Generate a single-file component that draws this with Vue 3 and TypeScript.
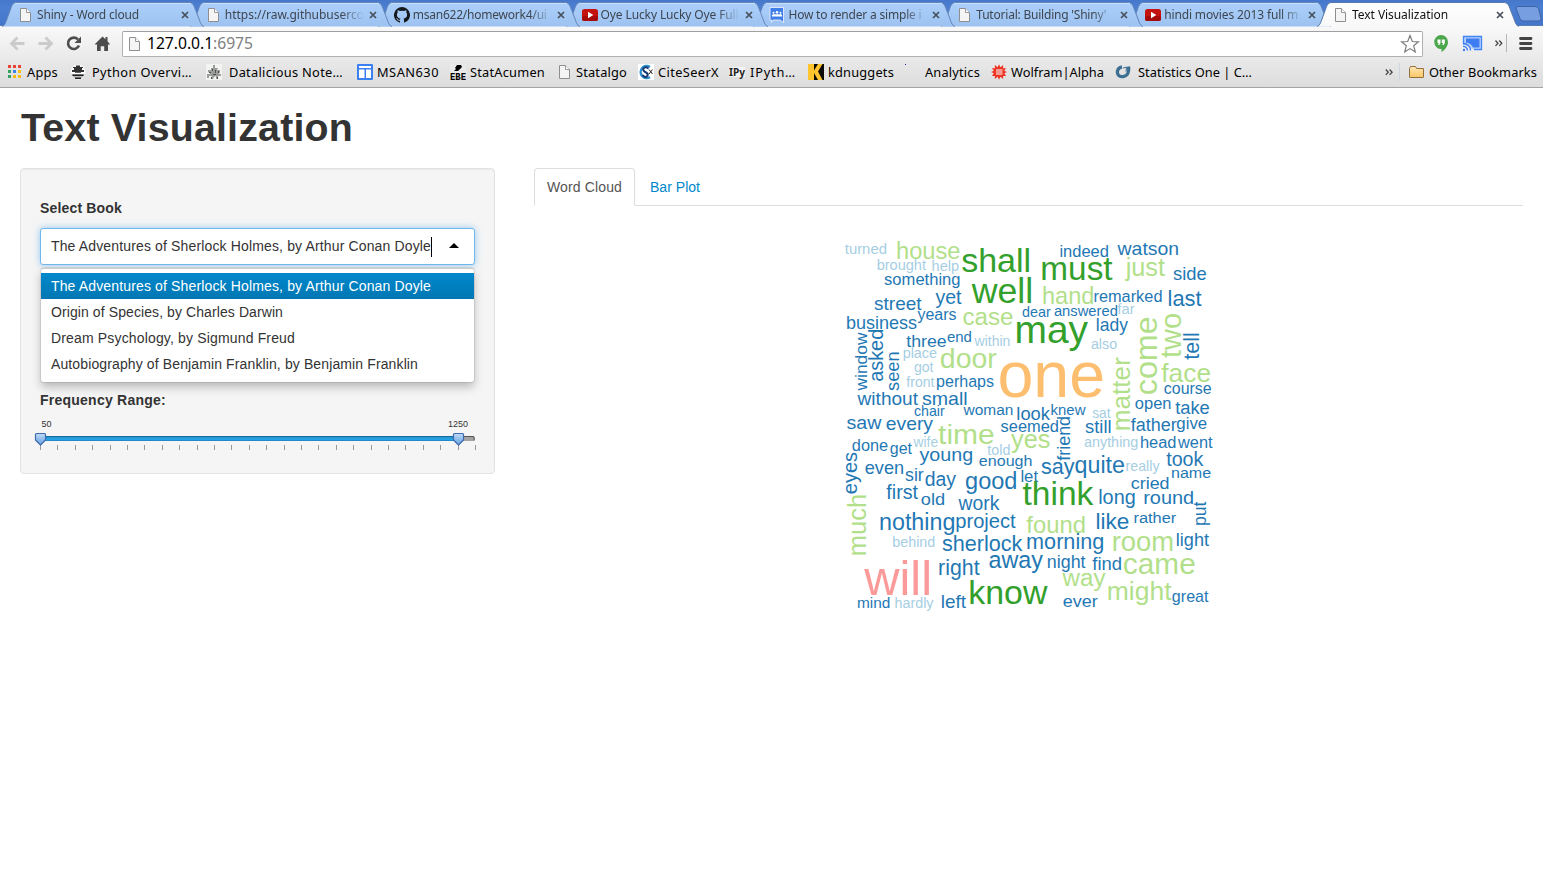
<script setup lang="ts">
import { ref } from 'vue'

type IconName =
  | 'file' | 'github' | 'youtube' | 'group' | 'apps' | 'python' | 'robot' | 'sites'
  | 'ebe' | 'cite' | 'ipy' | 'kd' | 'dot' | 'wolfram' | 'stat'

interface BrowserTab { title: string; icon: IconName; width: number }
interface Bookmark { title: string; icon: IconName; left: number; text: number; right: number }
interface Word {
  text: string
  start: number
  end: number
  base: number
  color: string
  vertical: boolean
  size?: number
}

const tabs: BrowserTab[] = [
  { title: 'Shiny - Word cloud', icon: 'file', width: 102 },
  { title: 'https://raw.githubuserco', icon: 'file', width: 139 },
  { title: 'msan622/homework4/ui', icon: 'github', width: 134 },
  { title: 'Oye Lucky Lucky Oye Full', icon: 'youtube', width: 138 },
  { title: 'How to render a simple i', icon: 'group', width: 133 },
  { title: "Tutorial: Building 'Shiny'", icon: 'file', width: 130 },
  { title: 'hindi movies 2013 full m', icon: 'youtube', width: 134 },
  { title: 'Text Visualization', icon: 'file', width: 96 },
]

const bookmarks: Bookmark[] = [
  { title: 'Apps', icon: 'apps', left: 7, text: 27, right: 58 },
  { title: 'Python Overvi…', icon: 'python', left: 70, text: 92, right: 192 },
  { title: 'Datalicious Note…', icon: 'robot', left: 206, text: 229, right: 343 },
  { title: 'MSAN630', icon: 'sites', left: 357, text: 377, right: 439 },
  { title: 'StatAcumen', icon: 'ebe', left: 450, text: 470, right: 545 },
  { title: 'Statalgo', icon: 'file', left: 557, text: 576, right: 627 },
  { title: 'CiteSeerX', icon: 'cite', left: 638, text: 658, right: 719 },
  { title: 'IPyth…', icon: 'ipy', left: 729, text: 750, right: 796 },
  { title: 'kdnuggets', icon: 'kd', left: 808, text: 828, right: 894 },
  { title: 'Analytics', icon: 'dot', left: 905, text: 925, right: 980 },
  { title: 'Wolfram|Alpha', icon: 'wolfram', left: 991, text: 1011, right: 1104 },
  { title: 'Statistics One | C…', icon: 'stat', left: 1115, text: 1138, right: 1252 },
]

const books = [
  { title: 'The Adventures of Sherlock Holmes, by Arthur Conan Doyle', width: 380 },
  { title: 'Origin of Species, by Charles Darwin', width: 232 },
  { title: 'Dream Psychology, by Sigmund Freud', width: 244 },
  { title: 'Autobiography of Benjamin Franklin, by Benjamin Franklin', width: 367 },
]
const selected = ref(0)

/* Spreads letters so that a label fills the given width. */
const vFit = {
  mounted(el: HTMLElement, binding: { value: number }) {
    const range = document.createRange()
    range.selectNodeContents(el)
    const natural = range.getBoundingClientRect().width
    const count = (el.textContent ?? '').trim().length
    if (count > 0) el.style.letterSpacing = `${(binding.value - natural) / count}px`
  },
}

const palette: Record<string, string> = {
  A: '#a6cee3', B: '#1f78b4', G: '#b2df8a', D: '#33a02c', P: '#fb9a99', O: '#fdbf6f',
}

/* Horizontal words: text, left, right, baseline, colour, optional font size */
const across = `
turned 845 886 254 A|house 897.5 959.5 259 G|brought 877.5 926 270 A|help 932.5 958.5 270.5 A
something 884.5 959.5 285 B|shall 962 1029 272 D|well 971.5 1031 302.5 D|yet 935.5 961.5 303.5 B
street 874.5 921.5 310 B|years 917.5 956 320 B|business 847 916.5 328.5 B|case 963.5 1012.5 325 G
three 906.5 946 346.5 B 17|end 947.5 971 342 B|within 974.5 1009.5 346 A|place 903.5 936.5 357.5 A
got 914.5 933.5 371.5 A|door 941 996.5 368 G|front 906.5 934.5 387 A|perhaps 937 993.5 387 B
without 857.5 918 404.5 B 18|small 922.5 966.5 404.5 B 18.3|chair 914.5 944.5 415.5 B|woman 963.5 1012.5 415 B 15.3
one 1000 1102.5 397 O|may 1017 1088 343 D|indeed 1060.5 1108 257 B|watson 1117.5 1178 255 B 18
must 1042.5 1112.5 279.5 D|just 1125 1165 275.5 G|side 1173.5 1206 279.5 B|hand 1043.5 1093 304 G
remarked 1094.5 1161.5 301.5 B|last 1169 1201.5 306 B|dear 1022.5 1050.5 317 B
answered 1054.5 1117 316 B|far 1117.5 1134.5 314 A|lady 1097 1128 331 B|also 1091.5 1116.5 348.5 A
face 1161.5 1210 381.5 G|course 1164.5 1211 393.5 B|open 1135.5 1170.5 408.5 B|take 1175.5 1209 414 B
look 1017.5 1050 420 B|knew 1051.5 1085.5 415 B|sat 1092.5 1110.5 417.5 A|saw 847 881.5 428.5 B 18.3
every 886.5 933 429.5 B 18.3|time 938.5 993.5 443.5 G 28.5|seemed 1001 1058 432 B|yes 1011 1049.5 447.5 G
done 852.5 887.5 451 B|get 890.5 912 453.5 B|wife 913.5 937.5 446.5 A|told 987.5 1009.5 455 A
young 919.5 972 461 B 18.3|enough 979.5 1031.5 466 B 15.3|even 865.5 903 473.5 B|sir 905.5 923.5 480.5 B
day 925.5 956 486 B|good 966 1016 489 B|let 1021.5 1038 481.5 B|first 886.5 918 498.5 B
old 921.5 944 504.5 B 16.5|work 958.5 999.5 509.5 B|think 1023 1093.5 505 D|nothing 880.5 954 529.5 B
project 956.5 1015.5 527.5 B|behind 893 934.5 547 A|sherlock 942.5 1022.5 551 B|will 864 929 594.5 P
right 939.5 979.5 574.5 B|away 989.5 1043 567.5 B|mind 858 889.5 607.5 B 15.3|hardly 895.5 933.5 608 A
left 942 966 607.5 B|know 970.5 1047.5 603.5 D|still 1085.5 1110.5 432.5 B|father 1131 1176.5 430.5 B
give 1177 1206.5 429 B 16.3|anything 1084.5 1137.5 447 A|head 1141 1175.5 447.5 B|went 1178 1212.5 448 B
say 1041.5 1074.5 474 B|quite 1075.5 1124 472.5 B|really 1126.5 1159.5 470.5 A|took 1166.5 1203.5 466 B
name 1172 1210.5 478 B 15.5|cried 1131.5 1168.5 489 B 16.5|long 1099.5 1134.5 503.5 B|round 1144.5 1193 503.5 B 18.3
found 1026.5 1084.5 533 G|like 1097 1128.5 529 B|rather 1134.5 1176 522.5 B 15.5|morning 1027.5 1103 549 B
room 1113.5 1172.5 551 G|light 1177 1209 545.5 B|night 1048 1085.5 568 B|find 1092.5 1121 570 B
came 1124 1194.5 573.5 G|way 1062.5 1105.5 586 G|might 1108.5 1171.5 600 G|great 1172.5 1208.5 601.5 B
ever 1063.5 1097.5 607 B 16.5`

/* Words turned a quarter: text, top, bottom, baseline x, colour */
const upright = `
window 332.5 390.5 867 B|asked 330 381 883 B|seen 352.5 390.5 899 B|come 317.5 394 1157 G 31.5
two 314 357.5 1180.5 G|tell 333.5 359.5 1199 B|matter 357.5 429.5 1130 G|eyes 452.5 493.5 856.5 B
much 495.5 554.5 865.5 G|friend 417 460.5 1070 B|put 501.5 525 1206 B`

function parse(source: string, vertical: boolean): Word[] {
  return source.trim().split(/[|\n]/).map((entry) => {
    const [text, start, end, base, color, size] = entry.split(' ')
    return {
      text, start: +start, end: +end, base: +base, color: palette[color], vertical,
      size: size ? +size : undefined,
    }
  })
}

const pen = document.createElement('canvas').getContext('2d')!
pen.font = '200px "Liberation Sans", Arial, sans-serif'

/* Unless given, a word's size follows from the span its ink covers; a given size is widened to the span. */
const cloud = [...parse(across, false), ...parse(upright, true)].map((word) => {
  const m = pen.measureText(word.text)
  const ink = m.actualBoundingBoxLeft + m.actualBoundingBoxRight
  const natural = (200 * (word.end - word.start)) / ink
  const size = word.size ?? natural
  const stretch = natural / size
  const bearing = (m.actualBoundingBoxLeft * natural) / 200
  const place = word.vertical
    ? `translate(${word.base} ${word.end - bearing}) rotate(-90) scale(${stretch.toFixed(4)} 1)`
    : `translate(${word.start + bearing} ${word.base}) scale(${stretch.toFixed(4)} 1)`
  return { text: word.text, color: word.color, size: size.toFixed(2), place }
})

const ticks = Array.from({ length: 26 }, (_, i) => Math.round(i * 17.4))
</script>

<template>
  <div class="window">
    <svg class="defs" width="0" height="0">
      <defs>
        <linearGradient id="tabFill" x1="0" y1="0" x2="0" y2="1">
          <stop offset="0" stop-color="#acd0fa" /><stop offset="1" stop-color="#9dc2f1" />
        </linearGradient>
        <linearGradient id="tabActive" x1="0" y1="0" x2="0" y2="1">
          <stop offset="0" stop-color="#ffffff" /><stop offset="1" stop-color="#f8f8f8" />
        </linearGradient>
        <linearGradient id="thumb" x1="0" y1="0" x2="0" y2="1">
          <stop offset="0" stop-color="#c5dcf6" /><stop offset=".5" stop-color="#8fbcec" /><stop offset="1" stop-color="#6ba6e6" />
        </linearGradient>
        <linearGradient id="folder" x1="0" y1="0" x2="0" y2="1">
          <stop offset="0" stop-color="#ffe8b5" /><stop offset="1" stop-color="#fbc465" />
        </linearGradient>
        <symbol id="i-file" viewBox="0 0 16 16">
          <path d="M2.5 1.5h6l4 4v9h-10z" fill="#f5f5f5" stroke="#8e8e8e" />
          <path d="M8.5 1.5v4h4" fill="#fff" stroke="#9a9a9a" />
        </symbol>
        <symbol id="i-github" viewBox="0 0 16 16">
          <path fill="#14171c" d="M8 0a8 8 0 0 0-2.5 15.6c.4.1.5-.2.5-.4v-1.5c-2.2.5-2.7-.9-2.7-.9-.4-.9-.9-1.2-.9-1.2-.7-.5.1-.5.1-.5.8.1 1.2.8 1.2.8.7 1.2 1.9.9 2.3.7.1-.5.3-.9.5-1.1-1.8-.2-3.6-.9-3.6-4 0-.9.3-1.6.8-2.1-.1-.2-.4-1 .1-2.1 0 0 .7-.2 2.2.8a7.6 7.6 0 0 1 4 0c1.5-1 2.2-.8 2.2-.8.4 1.1.2 1.9.1 2.1.5.6.8 1.3.8 2.1 0 3.1-1.9 3.8-3.7 4 .3.2.6.7.6 1.5v2.2c0 .2.1.5.5.4A8 8 0 0 0 8 0Z" />
        </symbol>
        <symbol id="i-youtube" viewBox="0 0 16 16">
          <rect y="2" width="16" height="12" rx="2.5" fill="#c4120f" />
          <rect y="9" width="16" height="5" rx="2" fill="#a50b0b" />
          <path d="M6 4.8v6.4L11.3 8z" fill="#fff" />
        </symbol>
        <symbol id="i-group" viewBox="0 0 16 16">
          <path d="M1 .5h13.5v15L11 13H4l-1.5 2.5V13H1z" fill="#3f7de8" stroke="#dce6f8" />
          <path d="M3 9.5V8l2-1 2 .5L8 7l1.5.5 2-.5 1.5 1v1.5z" fill="#fff" />
          <circle cx="4.5" cy="5.7" r="1" fill="#fff" /><circle cx="8" cy="5.2" r="1.2" fill="#fff" /><circle cx="11.5" cy="5.7" r="1" fill="#fff" />
        </symbol>
        <symbol id="i-apps" viewBox="0 0 16 16">
          <path d="M1 1h3v3H1zM6 1h3v3H6zM11 1h3v3h-3z" fill="#ea4335" />
          <path d="M1 6h3v3H1z" fill="#34a265" /><path d="M6 6h3v3H6z" fill="#3b83e8" /><path d="M11 6h3v3h-3z" fill="#f9bc15" />
          <path d="M1 11h3v3H1z" fill="#34a265" /><path d="M6 11h3v3H6zM11 11h3v3h-3z" fill="#f9bc15" />
        </symbol>
        <symbol id="i-python" viewBox="0 0 16 16">
          <circle cx="8" cy="8" r="7.5" fill="#fbfbfb" /><path d="M1 10h14a7.5 7.5 0 0 1-14 0z" fill="#bbb" />
          <path d="M6 1.5h4V3h3v1h-1v2h2v2h-3v.8H5V8H2V6h2V4H3V3h3z" fill="#333" />
          <path d="M2.5 10.5h11V12h-11zM5 13.5h6V15H5z" fill="#222" />
        </symbol>
        <symbol id="i-robot" viewBox="0 0 16 16">
          <path d="M0 0h16v16H0z" fill="#f3f3f1" />
          <path d="M7 1h2v3h3l-1 2h3v2l-1 2h2v2h-3v3h-2v-3l-2 1-1 2H5l1-3H3v2H1v-4h3V9L2 8V6h3V4h2z" fill="#9a9d99" />
          <path d="M6 5h1v2H6zM9 6h1v3H9zM3 8h2v1H3zM7 10h3v1H7zM5 13h1v2H5zM11 13h1v2h-1zM12 7h1v2h-1z" fill="#4c4e4c" />
        </symbol>
        <symbol id="i-sites" viewBox="0 0 16 16">
          <rect width="16" height="16" rx="1" fill="#3c7ff0" />
          <path d="M2 2h12v2H2zM2 5.5h5.5V14H2zM9 5.5h5V14H9z" fill="#fff" />
        </symbol>
        <symbol id="i-ebe" viewBox="0 0 16 16">
          <path d="M0 0h16v16H0z" fill="#e9e9e9" /><path d="M4 7l2-2-1-1 2-3h4l1 2-3 3-1 1z" fill="#000" />
          <text x="0" y="15.5" font-family="Liberation Mono, monospace" font-weight="bold" font-size="10.5" textLength="16" lengthAdjust="spacingAndGlyphs">EBE</text>
        </symbol>
        <symbol id="i-cite" viewBox="0 0 16 16">
          <path d="M0 0h16v16H0z" fill="#fff" /><path d="M12 3a6 6 0 1 0 0 10" fill="none" stroke="#2d8fd0" stroke-width="2.5" />
          <path d="M10.5 4.5C8 2 4 4 5.5 6.5S11 8.500 9.500 11.500 5 12 4.500 11" fill="none" stroke="#16376f" stroke-width="2" />
          <path d="M11 5.5l3.5 4.5m0-4.5l-3.5 4.5" stroke="#222" stroke-width="1" />
        </symbol>
        <symbol id="i-ipy" viewBox="0 0 16 16">
          <path d="M0 3h16v10H0z" fill="#f4f4f4" />
          <text x="0" y="12" font-family="Noto Sans, sans-serif" font-weight="bold" font-size="10.5" textLength="16" lengthAdjust="spacingAndGlyphs" fill="#252525">IPy</text>
        </symbol>
        <symbol id="i-kd" viewBox="0 0 16 16">
          <path d="M0 0h16v16H0z" fill="#0b0a06" />
          <path d="M0 0h6v6.5L10 0h4.500L10 7.500l4.500 8.500H10L6 9v7H0z" fill="#ffc42e" />
        </symbol>
        <symbol id="i-dot" viewBox="0 0 16 16"><path d="M0 0h1v1H0z" fill="#2422b8" /></symbol>
        <symbol id="i-wolfram" viewBox="0 0 16 16">
          <path d="M8 .3l1.4 3L12.2 1l-.1 3.2 3 .1-1.9 2.4L16 8l-2.700 1.300 1.800 2.700-3-.1.1 3.200-2.800-2.300L8 15.800l-1.400-3-2.800 2.300.1-3.200-3 .1 1.900-2.700L0 8l2.800-1.300L.9 4.300l3-.1L3.800 1l2.800 2.300z" fill="#ee3524" />
          <path d="M5 6h6.5M5 8h6.500M5 10h6.500" stroke="#fff" stroke-width="1" />
        </symbol>
        <symbol id="i-stat" viewBox="0 0 16 16">
          <path d="M7 3C3 3.500 1.500 7.500 3 10.500 5 14 11.500 13 13 9c.8-2 .8-4 .5-6.500" fill="none" stroke="#3d6f92" stroke-width="3.3" />
          <path d="M8 4l3.500-.8-.5 4.500" fill="none" stroke="#3d6f92" stroke-width="1" />
        </symbol>
      </defs>
    </svg>

    <header class="chrome">
      <div class="tabstrip">
        <div v-for="(tab, i) in tabs" :key="i" class="tab" :class="{ active: i === 7 }" :style="{ zIndex: i === 7 ? 20 : 10 - i }">
          <svg class="tab-shape" width="207" height="27" viewBox="0 0 207 27">
            <path
              d="M1 26.500C4 25.500 4.500 23 6 19L10.500 6.500Q12 2.500 15 2.500H188.500Q191.500 2.500 193 6L198 19C199.500 23 200 25.500 203 26.500"
              :fill="i === 7 ? 'url(#tabActive)' : 'url(#tabFill)'"
              :stroke="i === 7 ? '#5578ab' : '#6485b9'"
            />
            <path v-if="i !== 7" d="M14 3.500H190" stroke="#c4defb" />
          </svg>
          <svg class="icon" width="16" height="16"><use :href="`#i-${tab.icon}`" /></svg>
          <span class="tab-title"><span v-fit="tab.width">{{ tab.title }}</span></span>
          <svg class="close" width="8" height="8" viewBox="0 0 8 8"><path d="M1 1l6 6M7 1l-6 6" /></svg>
        </div>
        <svg class="new-tab" width="27" height="16" viewBox="0 0 27 16">
          <path d="M3 .5h17.500q2 0 3 2L26 12q.6 3-2 3H8.500q-2.500 0-3.500-2.500L1.200 3Q.5.5 3 .5z" fill="#769ee0" stroke="#3c63a6" />
        </svg>
      </div>

      <div class="toolbar">
        <svg class="nav" width="122" height="30" viewBox="0 0 122 30">
          <g fill="none" stroke="#cbcbcb" stroke-width="2.8">
            <path d="M24.500 17.500H12.500M17.500 11.500l-6 6 6 6" /><path d="M38.500 17.500h12M45.500 11.500l6 6-6 6" />
          </g>
          <path d="M78 13.500A5.700 5.700 0 1 0 79 19.500" fill="none" stroke="#4d4d4d" stroke-width="2.6" />
          <path d="M81 10.500V17h-6.500z" fill="#4d4d4d" />
          <path d="M94.500 18.500L102.500 10.500l3 2.800V11h2v4.300l2.700 3.200H108V25h-3.800v-4.800h-3.500V25H97v-6.500z" fill="#4d4d4d" />
        </svg>
        <div class="omnibox">
          <svg class="icon" width="16" height="16"><use href="#i-file" /></svg>
          <span v-fit="106" class="url">127.0.0.1<span>:6975</span></span>
          <svg class="star" width="20" height="20" viewBox="0 0 20 20">
            <path d="M10 1.500l2.300 6 6.200.3-4.800 4 1.600 6.200L10 14.600l-5.300 3.400 1.600-6.200-4.800-4 6.200-.3z" fill="#fff" stroke="#7c7c7c" stroke-width="1.2" />
          </svg>
        </div>
        <svg class="ext" width="120" height="32" viewBox="1 0 120 32">
          <path d="M19 9a7 7 0 0 1 7 7c0 4.500-3.500 8-6.500 10v-3A7 7 0 1 1 19 9z" fill="#4ca64c" />
          <path d="M15.500 13.500h3v3.500l-1.300 2h-1.300l.8-2h-1.200zM19.800 13.500h3v3.500l-1.300 2h-1.300l.8-2h-1.200z" fill="#fff" />
          <path d="M41.500 18.500V10.500h18v13H52" fill="#b5cffc" stroke="#4285f4" stroke-width="1.3" />
          <path d="M44 12.500h13.500v9H51a9 9 0 0 0-7-5z" fill="#3d7df0" />
          <path d="M41 17.500a7 7 0 0 1 7.500 7M41 20.500a4 4 0 0 1 4.500 4" fill="none" stroke="#3d7df0" stroke-width="1.3" />
          <circle cx="42" cy="24" r="1.2" fill="#3d7df0" />
          <path d="M73.500 14.500l2.500 2.700-2.500 2.700M77.300 14.500l2.500 2.700-2.500 2.700" fill="none" stroke="#444" stroke-width="1.3" />
          <path d="M84.500 8v18" stroke="#b5b5b5" />
          <path d="M98.500 12.500h10.500M98.500 17.500h10.500M98.500 22.500h10.500" stroke="#444" stroke-width="2.8" stroke-linecap="round" />
        </svg>
      </div>

      <nav class="bookmarks">
        <a
          v-for="(b, i) in bookmarks"
          :key="b.title"
          class="bookmark"
          :style="{ width: `${(bookmarks[i + 1]?.left ?? 1385) - b.left}px` }"
        >
          <span class="bookmark-icon" :style="{ width: `${b.text - b.left}px` }">
            <svg width="16" height="16"><use :href="`#i-${b.icon}`" /></svg>
          </span>
          <span v-fit="b.right - b.text" class="bookmark-title">{{ b.title }}</span>
        </a>
        <svg class="more" width="44" height="26" viewBox="0 0 44 26">
          <path d="M.8 10.500l2.500 2.700-2.500 2.700M4.600 10.500l2.500 2.700-2.500 2.700" fill="none" stroke="#444" stroke-width="1.3" />
          <path d="M14.500 4v18" stroke="#cfd5e3" />
          <path d="M24.500 18V9.500l1-2h5l1.200 2h6.800V18q0 .5-.5.500H25q-.5 0-.5-.5z" fill="url(#folder)" stroke="#93713c" />
        </svg>
        <span v-fit="108" class="bookmark-title">Other Bookmarks</span>
      </nav>
    </header>

    <main class="page">
      <h1><span v-fit="332">Text Visualization</span></h1>
      <div class="columns">
        <form class="well" @submit.prevent>
          <label><span v-fit="82">Select Book</span></label>
          <div class="select">
            <span v-fit="books[selected].width">{{ books[selected].title }}</span><i class="caret"></i><i class="arrow"></i>
            <ul class="menu">
              <li v-for="(book, i) in books" :key="i" :class="{ on: i === selected }" @click="selected = i">
                <span v-fit="book.width">{{ book.title }}</span>
              </li>
            </ul>
          </div>
          <label class="range-label"><span v-fit="126">Frequency Range:</span></label>
          <svg class="slider" width="455" height="40" viewBox="-10 0 455 40">
            <text x="1.5" y="11">50</text>
            <text x="408" y="11">1250</text>
            <rect x="0" y="20" width="435" height="5" rx="2" fill="#a3a3a3" />
            <path d="M2 20.500h431.500q1 1.500.5 4" fill="none" stroke="#565656" />
            <rect x="0" y="20" width="418" height="5" fill="#27a0e2" />
            <rect x="0" y="20" width="418" height="1.2" fill="#176c9c" />
            <rect x="0" y="24" width="418" height="1" fill="#1f8cc9" />
            <path v-for="t in ticks" :key="t" :d="`M${t + 0.5} 29v5`" stroke="#999" />
            <g fill="url(#thumb)" stroke="#3e6bad" stroke-width="1.2" stroke-linejoin="round">
              <path d="M-3.500 17.500h8q1 0 1 1v5.500L.5 29l-5-5v-5.500q0-1 1-1z" />
              <path d="M414.500 17.500h8q1 0 1 1v5.500l-5 5-5-5v-5.500q0-1 1-1z" />
            </g>
          </svg>
        </form>

        <section class="output">
          <div class="nav-tabs">
            <a class="current"><span v-fit="75">Word Cloud</span></a>
            <a><span v-fit="50">Bar Plot</span></a>
          </div>
          <svg class="cloud" width="400" height="400" viewBox="828 226 400 400">
            <text v-for="w in cloud" :key="w.text" :transform="w.place" :font-size="w.size" :fill="w.color">{{ w.text }}</text>
          </svg>
        </section>
      </div>
    </main>
  </div>
</template>

<style>
html, body { margin: 0; background: #fff; overflow: hidden; }
</style>

<style scoped>
.window { width: 1543px; height: 876px; overflow: hidden; background: #fff; }
.defs { position: absolute; }
.chrome { height: 88px; box-sizing: border-box; border-bottom: 1px solid #a3a3a3; background: linear-gradient(#f9f9f9 26px, #dcdcdc 87px); font-family: "Noto Sans", sans-serif; }
.tabstrip { display: flex; height: 26px; background: linear-gradient(#4677cb, #4b7fd2 8px, #4475c8); box-shadow: inset 0 -1px #5a7db3; }
.tab { position: relative; flex: none; display: flex; align-items: center; width: 187.86px; height: 26px; padding-left: 18px; box-sizing: border-box; }
.tab-shape { position: absolute; left: 1px; top: 0; }
.icon { position: relative; flex: none; top: 2px; margin-right: 3px; }
.tab-title { position: relative; width: 139px; top: 2px; flex: none; overflow: hidden; white-space: nowrap; font-size: 12px; line-height: 20px; color: #3f4650; mask-image: linear-gradient(90deg, #000 117px, transparent 139px); }
.tab.active .tab-title { color: #111; }
.close { position: relative; flex: none; top: 2px; margin-left: 5px; fill: none; stroke: #48505b; stroke-width: 1.7; }
.new-tab { margin: 6px 0 0 12px; flex: none; position: relative; }
.toolbar { display: flex; height: 31px; }
.nav { flex: none; }
.omnibox { display: flex; align-items: center; width: 1302px; height: 26px; margin-top: 5px; padding: 0 2px 0 4px; box-sizing: border-box; border: 1px solid #b0b0b0; border-top-color: #a0a0a0; border-radius: 2px; background: #fff; }
.omnibox .icon { top: 0; margin-right: 4px; }
.url { position: relative; top: -1px; flex: none; font-size: 15.7px; line-height: 24px; color: #000; white-space: nowrap; }
.url span { color: #808080; }
.star { margin-left: auto; }
.ext { flex: none; }
.bookmarks { display: flex; height: 30px; padding-left: 7px; font-size: 12.8px; line-height: 30px; color: #000; white-space: nowrap; }
.bookmark { display: flex; flex: none; }
.bookmark-icon { display: flex; flex: none; align-items: center; }
.bookmark-title { padding-top: 1px; line-height: 29px; }
.more { flex: none; margin-top: 2px; }
.page { padding: 0 20px; font: 14px/20px "Liberation Sans", Arial, sans-serif; color: #333; }
h1 { margin: 19px 0 21px; padding-left: 1px; height: 40px; font-size: 39.3px; line-height: 40px; white-space: nowrap; }
.columns { display: flex; gap: 39px; }
.well { width: 475px; height: 306px; box-sizing: border-box; padding: 29px 19px 0; border: 1px solid #e3e3e3; border-radius: 4px; background: #f5f5f5; box-shadow: inset 0 1px 1px rgba(0,0,0,.05); }
label { display: block; height: 20px; font-weight: bold; white-space: nowrap; }
.select { position: relative; display: flex; align-items: center; height: 37px; margin-top: 10px; padding: 0 10px; box-sizing: border-box; border: 1px solid #70b7ec; border-radius: 3px; background: #fff; box-shadow: 0 0 7px rgba(82,168,236,.6); white-space: nowrap; }
.select > span { position: relative; top: -1px; }
.caret { width: 1px; height: 20px; background: #000; }
.arrow { margin: 0 5px 2px auto; border: 5px solid transparent; border-top: 0; border-bottom-color: #000; }
.menu { position: absolute; z-index: 2; left: 0; top: 39px; width: 433px; height: 114px; margin: 0; padding: 4px 0; box-sizing: border-box; list-style: none; border: 1px solid #ccc; border-width: 1px 0 0; border-radius: 3px; background: #fff; box-shadow: 0 0 0 1px rgba(0,0,0,.08), 0 5px 10px rgba(0,0,0,.25); }
.menu li { height: 26px; line-height: 26px; padding: 0 10px; }
.menu li.on { color: #fff; background: linear-gradient(#0088cc, #0077b3); }
.range-label { margin-top: 125px; }
.slider { display: block; margin: 6px 0 0 -10px; font-size: 9px; fill: #333; }
.output { width: 989px; }
.nav-tabs { display: flex; height: 38px; box-sizing: border-box; border-bottom: 1px solid #ddd; white-space: nowrap; }
.nav-tabs a { height: 38px; line-height: 36px; padding: 0 12px; margin-right: 2px; box-sizing: border-box; border: 1px solid transparent; color: #08c; }
.nav-tabs a.current { width: 101px; border-color: #ddd #ddd #fff; border-radius: 4px 4px 0 0; background: #fff; color: #555; }
.cloud { display: block; margin: 20px auto 0 294px; font-family: "Liberation Sans", Arial, sans-serif; }
</style>
